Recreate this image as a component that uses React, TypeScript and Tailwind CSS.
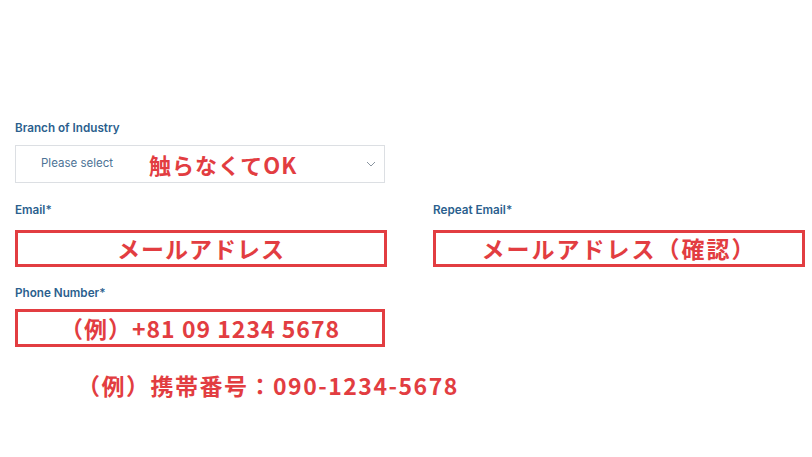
import React from 'react';

const jp = { fontFamily: '"Noto Sans CJK JP", "Noto Sans", sans-serif' };
const ui = { fontFamily: 'Inter, "Noto Sans", sans-serif' };

const Label: React.FC<{ text: string; className?: string }> = ({ text, className = '' }) => (
  <div style={ui} className={`text-[11.7px] leading-4 font-semibold text-[#2b5f8e] ${className}`}>
    {text}
  </div>
);

const RedBox: React.FC<{ text: string; className?: string }> = ({ text, className = '' }) => (
  <div
    style={jp}
    className={`flex items-center justify-center border-[3px] border-[#e23d41] text-[#e23d41] font-bold text-[23px] tracking-[1px] leading-none ${className}`}
  >
    {text}
  </div>
);

export default function App() {
  return (
    <div className="w-[812px] h-[457px] bg-white pt-[120px] pl-[15px] overflow-hidden">
      {/* Branch of industry */}
      <Label text="Branch of Industry" />
      <div className="mt-[9px] w-[370px] h-[38px] border border-[#dcdfe3] flex items-center pl-[25px] pr-[8px]">
        <span style={ui} className="text-[11.5px] text-[#4d7396]">Please select</span>
        <span style={jp} className="ml-[36px] text-[22px] tracking-[1px] font-bold text-[#e23d41] leading-none">
          触らなくてOK
        </span>
        <svg className="ml-auto" width="10" height="6" viewBox="0 0 10 6" fill="none">
          <path d="M1 1l4 4 4-4" stroke="#8a95a0" strokeWidth="1" />
        </svg>
      </div>

      {/* Email row */}
      <div className="mt-[19px] grid grid-cols-[372px_372px] gap-x-[46px]">
        <div>
          <Label text="Email*" />
          <RedBox text="メールアドレス" className="mt-[12px] h-[37px]" />
        </div>
        <div>
          <Label text="Repeat Email*" />
          <RedBox text="メールアドレス（確認）" className="mt-[12px] h-[37px] tracking-[2px]" />
        </div>
      </div>

      {/* Phone */}
      <Label text="Phone Number*" className="mt-[18px]" />
      <RedBox text="（例）+81 09 1234 5678" className="mt-[8px] h-[38px] w-[370px]" />

      <div style={jp} className="mt-[22px] ml-[62px] text-[23px] tracking-[1.5px] font-bold text-[#e23d41] leading-8">
        （例）携帯番号：090-1234-5678
      </div>
    </div>
  );
}
